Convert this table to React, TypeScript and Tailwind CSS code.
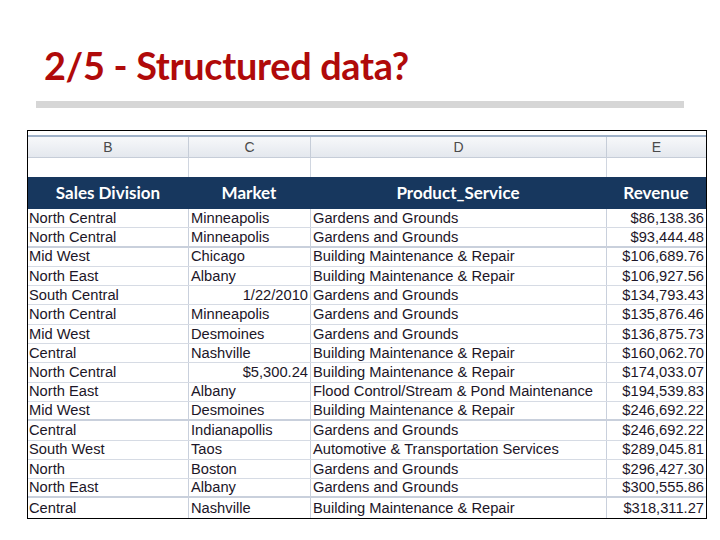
import React from "react";

const rows: [string, string, string, string][] = [
  ["North Central", "Minneapolis", "Gardens and Grounds", "$86,138.36"],
  ["North Central", "Minneapolis", "Gardens and Grounds", "$93,444.48"],
  ["Mid West", "Chicago", "Building Maintenance & Repair", "$106,689.76"],
  ["North East", "Albany", "Building Maintenance & Repair", "$106,927.56"],
  ["South Central", "1/22/2010", "Gardens and Grounds", "$134,793.43"],
  ["North Central", "Minneapolis", "Gardens and Grounds", "$135,876.46"],
  ["Mid West", "Desmoines", "Gardens and Grounds", "$136,875.73"],
  ["Central", "Nashville", "Building Maintenance & Repair", "$160,062.70"],
  ["North Central", "$5,300.24", "Building Maintenance & Repair", "$174,033.07"],
  ["North East", "Albany", "Flood Control/Stream & Pond Maintenance", "$194,539.83"],
  ["Mid West", "Desmoines", "Building Maintenance & Repair", "$246,692.22"],
  ["Central", "Indianapollis", "Gardens and Grounds", "$246,692.22"],
  ["South West", "Taos", "Automotive & Transportation Services", "$289,045.81"],
  ["North", "Boston", "Gardens and Grounds", "$296,427.30"],
  ["North East", "Albany", "Gardens and Grounds", "$300,555.86"],
  ["Central", "Nashville", "Building Maintenance & Repair", "$318,311.27"],
];

const thick = new Set([1, 10, 14]);

const cols = "grid grid-cols-[160px_122px_296px_100px]";

export default function App() {
  return (
    <div className="w-[720px] h-[540px] bg-white overflow-hidden flex flex-col">
      <div className="pl-[44px] pt-[44px] h-[100px]">
        <h1
          className="text-[37.8px] leading-[44px] font-bold text-[#b00a0a] tracking-[-0.3px]"
          style={{ fontFamily: "Lato, 'Open Sans', sans-serif" }}
        >
          2/5 - Structured data?
        </h1>
      </div>
      <div className="ml-[36px] w-[648px] h-[7px] mt-[1px] bg-[#d6d6d6]" />
      <div
        className="ml-[27px] mt-[22px] w-[680px] border border-black flex flex-col"
        style={{ fontFamily: "'Liberation Sans', Arial, sans-serif" }}
      >
        <div className="h-[4px] bg-white" />
        <div className="h-[2px] bg-[#9fb1c8]" />
        <div className={`${cols} h-[21px] bg-gradient-to-b from-[#f7f8fa] to-[#e4e8ee] border-b border-[#c6cdd8] text-[14px] text-[#4a4a4a]`}>
          <div className="flex items-center justify-center">B</div>
          <div className="flex items-center justify-center border-l border-[#c6cdd8]">C</div>
          <div className="flex items-center justify-center border-l border-[#c6cdd8]">D</div>
          <div className="flex items-center justify-center border-l border-[#c6cdd8]">E</div>
        </div>
        <div className={`${cols} h-[19px]`}>
          <div />
          <div className="border-l border-[#d0d6e0]" />
          <div className="border-l border-[#d0d6e0]" />
          <div className="border-l border-[#d0d6e0]" />
        </div>
        <div
          className={`${cols} h-[32px] bg-[#17375e] text-white text-[17px] font-bold`}
          style={{ fontFamily: "Lato, 'Open Sans', sans-serif" }}
        >
          <div className="flex items-center justify-center">Sales Division</div>
          <div className="flex items-center justify-center">Market</div>
          <div className="flex items-center justify-center">Product_Service</div>
          <div className="flex items-center justify-center">Revenue</div>
        </div>
        {rows.map((r, i) => (
          <div
            key={i}
            className={`${cols} h-[19.3px] text-[14.7px] text-[#1c1628] leading-none ${
              i === rows.length - 1
                ? ""
                : thick.has(i)
                ? "border-b-2 border-[#c9d0dc]"
                : "border-b border-[#d6dbe4]"
            }`}
          >
            <div className="flex items-center pl-[1px] whitespace-nowrap overflow-hidden">{r[0]}</div>
            <div
              className={`flex items-center border-l border-[#c9d0dc] whitespace-nowrap overflow-hidden ${
                r[1].startsWith("$") || r[1].includes("/") ? "justify-end pr-[2px]" : "pl-[2px]"
              }`}
            >
              {r[1]}
            </div>
            <div className="flex items-center border-l border-[#c9d0dc] pl-[2px] whitespace-nowrap overflow-hidden">{r[2]}</div>
            <div className="flex items-center justify-end border-l border-[#c9d0dc] pr-[2px] whitespace-nowrap overflow-hidden">{r[3]}</div>
          </div>
        ))}
      </div>
    </div>
  );
}
